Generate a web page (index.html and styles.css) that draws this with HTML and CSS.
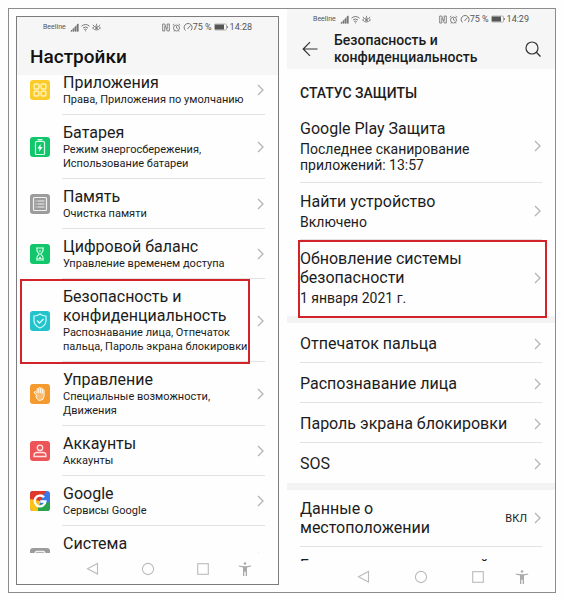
FILE: index.html
```html
<!DOCTYPE html>
<html lang="ru">
<head>
    <meta charset="UTF-8">
    <meta name="viewport" content="width=device-width, initial-scale=1.0">
    <title>Настройки безопасности</title>
    <link rel="stylesheet" href="styles.css">
</head>
<body>

    <!-- Shared icons -->
    <svg class="sprite" aria-hidden="true">
        <symbol id="chevron" viewBox="0 0 7 12"><path d="M1 1l5 5-5 5" fill="none" stroke="#b4b4b4" stroke-width="1.3"/></symbol>
        <symbol id="signal" viewBox="0 0 9 9"><path d="M0 8.500h8.500V0z" fill="#aaa"/><path d="M1 7h1v1.500H1zM3 5.500h1v3H3zM5 3.500h1v5H5zM7 1h1.500v7.500H7z" fill="#777"/></symbol>
        <symbol id="wifi" viewBox="0 0 9 9"><path d="M.5 3.200q4-3.400 8 0M2 5q2.500-2 5 0M3.300 6.600q1.200-1 2.400 0" fill="none" stroke="#777"/><circle cx="4.500" cy="7.800" r=".6" fill="#777"/></symbol>
        <symbol id="eye" viewBox="0 0 9 9"><path d="M.5 5q4-4 8 0-4 4-8 0zM4.500 2.500V.8M2 3.200l-1-1.400M7 3.200l1-1.400" fill="none" stroke="#777" stroke-width=".9"/><circle cx="4.500" cy="5" r="1.300" fill="#777"/></symbol>
        <symbol id="nfc" viewBox="0 0 8 9"><path d="M2.800 8H.7V1h2l2.600 7h2V1H5.200M2.800 3v5M5.200 1v5" fill="none" stroke="#777" stroke-width=".9"/></symbol>
        <symbol id="alarm" viewBox="0 0 9 9"><circle cx="4.500" cy="5" r="3" fill="none" stroke="#777" stroke-width=".9"/><path d="M.8 2.200L2.300 1M8.200 2.200L6.700 1M4.500 3.200V5l1.300.8M2.500 7.500L2 8.500M6.500 7.500l.5 1" fill="none" stroke="#777" stroke-width=".9"/></symbol>
        <symbol id="gauge" viewBox="0 0 10 10"><path d="M2.500 8.500A4 4 0 1 1 8 8.300M4.500 7l3-3.500" fill="none" stroke="#777" stroke-width="1"/></symbol>
        <symbol id="battery" viewBox="0 0 14 8"><rect x=".5" y="1" width="12" height="6" rx="1" fill="none" stroke="#999" stroke-width=".7"/><rect x="1" y="1.500" width="9" height="5" fill="#555"/><path d="M13.300 3v2" stroke="#777"/></symbol>
        <symbol id="nav-back" viewBox="0 0 14 14"><path d="M11.500 1.500v10.500L1.500 6.800z" fill="none" stroke="#bbb" stroke-width="1.100"/></symbol>
        <symbol id="nav-home" viewBox="0 0 14 14"><circle cx="7" cy="7" r="5.600" fill="none" stroke="#bbb" stroke-width="1.100"/></symbol>
        <symbol id="nav-recent" viewBox="0 0 14 14"><rect x="1.700" y="1.700" width="10.600" height="10.600" fill="none" stroke="#bbb" stroke-width="1.100"/></symbol>
        <symbol id="nav-access" viewBox="0 0 14 14"><circle cx="7" cy="1.500" r="1.300" fill="#aaa"/><path d="M.8 3.400Q7 5 13.200 3.400v1.200L9 5.400V14H7.700V9.800H6.300V14H5V5.400L.8 4.600z" fill="#aaa"/></symbol>
    </svg>

    <main class="frame">

        <!-- Settings list -->
        <section class="phone phone-left">
            <header class="top top-left">
                <div class="status">
                    <span class="carrier">Beeline</span>
                    <svg class="s9"><use href="#signal"/></svg>
                    <svg class="s9"><use href="#wifi"/></svg>
                    <svg class="s9"><use href="#eye"/></svg>
                    <span class="status-right">
                        <svg class="nfc"><use href="#nfc"/></svg>
                        <svg class="s9"><use href="#alarm"/></svg>
                        <span class="charge"><svg class="s10"><use href="#gauge"/></svg>75 %</span>
                        <svg class="battery"><use href="#battery"/></svg>
                        <span>14:28</span>
                    </span>
                </div>
                <h1>Настройки</h1>
            </header>

            <ul class="list settings">
                <li><a href="#apps">
                    <svg class="icon yellow" viewBox="0 0 20 20"><g fill="none" stroke="#fff3b8" stroke-width="1.400"><rect x="4" y="4" width="5" height="5" rx="1.500"/><rect x="11" y="4" width="5" height="5" rx="1.500"/><rect x="4" y="11" width="5" height="5" rx="1.500"/><rect x="11" y="11" width="5" height="5" rx="1.500"/></g></svg>
                    <span class="text"><b>Приложения</b><small>Права, Приложения по умолчанию</small></span>
                    <svg class="chevron"><use href="#chevron"/></svg>
                </a></li>
                <li><a href="#battery-page">
                    <svg class="icon green" viewBox="0 0 20 20"><rect x="5.500" y="4.500" width="9" height="13" rx="1" fill="none" stroke="#d9ffe9" stroke-width="1.200"/><path d="M7.500 2.800h5" stroke="#d9ffe9" stroke-width="1.400"/><path d="M10.500 7L7.500 11.500h2L9 15l3.500-5h-2z" fill="#fff"/></svg>
                    <span class="text"><b>Батарея</b><small>Режим энергосбережения,<br>Использование батареи</small></span>
                    <svg class="chevron"><use href="#chevron"/></svg>
                </a></li>
                <li><a href="#memory">
                    <svg class="icon gray" viewBox="0 0 20 20"><rect x="3.500" y="3.500" width="13" height="13" rx="1" fill="none" stroke="#f0f0f0" stroke-width="1.200"/><path d="M7.500 7h7M7.500 10h7M7.500 13h7M5.500 7h1M5.500 10h1M5.500 13h1" stroke="#f0f0f0" stroke-width="1.200"/></svg>
                    <span class="text"><b>Память</b><small>Очистка памяти</small></span>
                    <svg class="chevron"><use href="#chevron"/></svg>
                </a></li>
                <li><a href="#balance">
                    <svg class="icon green" viewBox="0 0 20 20"><path d="M6 4h8M6 16h8M7 4v2.500c0 2 2.200 2.500 2.200 3.500S7 11.500 7 13.500V16M13 4v2.500c0 2-2.200 2.500-2.200 3.500s2.200 1.500 2.200 3.500V16" fill="none" stroke="#d9ffe9" stroke-width="1.200"/><path d="M8.500 6.500h3L10 8zM8 15l2-2.500 2 2.500z" fill="#d9ffe9"/></svg>
                    <span class="text"><b>Цифровой баланс</b><small>Управление временем доступа</small></span>
                    <svg class="chevron"><use href="#chevron"/></svg>
                </a></li>
                <li class="marked"><a href="#security">
                    <svg class="icon teal" viewBox="0 0 20 20"><path d="M10 3q2.500 2 6 2v4.500q0 5-6 7.500-6-2.500-6-7.500V5q3.500 0 6-2z" fill="none" stroke="#d8fbff" stroke-width="1.200"/><path d="M7 9.500l2.500 2.500L13.500 8" fill="none" stroke="#d8fbff" stroke-width="1.300"/></svg>
                    <span class="text"><b>Безопасность и<br>конфиденциальность</b><small>Распознавание лица, Отпечаток<br>пальца, Пароль экрана блокировки</small></span>
                    <svg class="chevron"><use href="#chevron"/></svg>
                </a></li>
                <li><a href="#control">
                    <svg class="icon orange" viewBox="0 0 20 20"><path d="M7 12L4.600 9.200Q3.600 8 4.600 7.500q.8-.3 1.700.7L7 9V5.500q0-1 .8-1t.9 1V9 4.500q0-1 .9-1t.9 1V9 5q0-1 .9-1t.9 1v4.500V6.500q0-1 .9-1t.9 1V12q0 4-4 4.500-3.200 0-4.200-4.500z" fill="#f9bd74" stroke="#fff3df" stroke-width="1"/></svg>
                    <span class="text"><b>Управление</b><small>Специальные возможности,<br>Движения</small></span>
                    <svg class="chevron"><use href="#chevron"/></svg>
                </a></li>
                <li><a href="#accounts">
                    <svg class="icon red" viewBox="0 0 20 20"><g fill="none" stroke="#ffe3e3" stroke-width="1.300"><circle cx="10" cy="6.800" r="2.700"/><path d="M4 15.500v-1q0-3 3-3h6q3 0 3 3v1z"/></g></svg>
                    <span class="text"><b>Аккаунты</b><small>Аккаунты</small></span>
                    <svg class="chevron"><use href="#chevron"/></svg>
                </a></li>
                <li><a href="#google">
                    <svg class="icon" viewBox="0 0 20 20"><path d="M0 0h20v20H0z" fill="#3b78e7"/><path d="M0 0h16L10 10 0 12z" fill="#e0392b"/><path d="M0 8l10 2v10H0z" fill="#fbc116"/><path d="M8 14l12-3v9H8z" fill="#2ba24c"/><path d="M14 6.300A5.400 5.400 0 1 0 15.400 10.500H10.300" fill="none" stroke="#fff" stroke-width="2.400"/></svg>
                    <span class="text"><b>Google</b><small>Сервисы Google</small></span>
                    <svg class="chevron"><use href="#chevron"/></svg>
                </a></li>
                <li><a class="tall" href="#system">
                    <svg class="icon gray" viewBox="0 0 20 20"><rect x="5" y="3.500" width="10" height="13" rx="2" fill="none" stroke="#f0f0f0" stroke-width="1.300"/><circle cx="10" cy="7" r="2" fill="#f0f0f0"/></svg>
                    <span class="text"><b>Система</b></span>
                    <svg class="chevron"><use href="#chevron"/></svg>
                </a></li>
            </ul>

            <nav class="nav">
                <button aria-label="Назад"><svg><use href="#nav-back"/></svg></button>
                <button aria-label="Домой"><svg><use href="#nav-home"/></svg></button>
                <button aria-label="Недавние"><svg><use href="#nav-recent"/></svg></button>
                <button class="access" aria-label="Доступность"><svg><use href="#nav-access"/></svg></button>
            </nav>
        </section>

        <!-- Security page -->
        <section class="phone phone-right">
            <header class="top">
                <div class="status">
                    <span class="carrier">Beeline</span>
                    <svg class="s9"><use href="#signal"/></svg>
                    <svg class="s9"><use href="#wifi"/></svg>
                    <svg class="s9"><use href="#eye"/></svg>
                    <span class="status-right">
                        <svg class="nfc"><use href="#nfc"/></svg>
                        <svg class="s9"><use href="#alarm"/></svg>
                        <span class="charge"><svg class="s10"><use href="#gauge"/></svg>75 %</span>
                        <svg class="battery"><use href="#battery"/></svg>
                        <span>14:29</span>
                    </span>
                </div>
                <div class="title-bar">
                    <button aria-label="Назад"><svg class="back" viewBox="0 0 16 16"><path d="M15.500 8H1.500M8 1.200L1.200 8 8 14.800" fill="none" stroke="#333" stroke-width="1.200"/></svg></button>
                    <h2>Безопасность и<br>конфиденциальность</h2>
                    <button aria-label="Поиск"><svg class="search" viewBox="0 0 16 16"><circle cx="7" cy="7" r="6" fill="none" stroke="#333" stroke-width="1.200"/><path d="M11.300 11.300l4.200 4.200" stroke="#333" stroke-width="1.300"/></svg></button>
                </div>
            </header>

            <div class="list security">
                <h3>СТАТУС ЗАЩИТЫ</h3>
                <ul>
                    <li><a href="#protect"><span class="text"><b>Google Play Защита</b><small>Последнее сканирование<br>приложений: 13:57</small></span><svg class="chevron"><use href="#chevron"/></svg></a></li>
                    <li><a href="#find"><span class="text"><b>Найти устройство</b><small>Включено</small></span><svg class="chevron"><use href="#chevron"/></svg></a></li>
                    <li class="marked"><a href="#update"><span class="text"><b>Обновление системы<br>безопасности</b><small>1 января 2021 г.</small></span><svg class="chevron"><use href="#chevron"/></svg></a></li>
                </ul>
                <ul class="single">
                    <li><a href="#finger"><span class="text"><b>Отпечаток пальца</b></span><svg class="chevron"><use href="#chevron"/></svg></a></li>
                    <li><a href="#face"><span class="text"><b>Распознавание лица</b></span><svg class="chevron"><use href="#chevron"/></svg></a></li>
                    <li><a href="#password"><span class="text"><b>Пароль экрана блокировки</b></span><svg class="chevron"><use href="#chevron"/></svg></a></li>
                    <li><a href="#sos"><span class="text"><b>SOS</b></span><svg class="chevron"><use href="#chevron"/></svg></a></li>
                </ul>
                <ul>
                    <li><a href="#location"><span class="text"><b>Данные о<br>местоположении</b></span><span class="value">ВКЛ</span><svg class="chevron"><use href="#chevron"/></svg></a></li>
                    <li><a href="#lock"><span class="text"><b>Блокировка приложений</b></span></a></li>
                </ul>
            </div>

            <nav class="nav">
                <button aria-label="Назад"><svg><use href="#nav-back"/></svg></button>
                <button aria-label="Домой"><svg><use href="#nav-home"/></svg></button>
                <button aria-label="Недавние"><svg><use href="#nav-recent"/></svg></button>
                <button class="access" aria-label="Доступность"><svg><use href="#nav-access"/></svg></button>
            </nav>
        </section>
    </main>

</body>
</html>
```

FILE: styles.css
```css
* {
    box-sizing: border-box;
}

body {
    margin: 0;
    padding: 8px;
    background: #fefefe;
    color: #1c1c1c;
    font-family: Roboto, "Liberation Sans", sans-serif;
}

.sprite {
    display: none;
}

svg {
    display: block;
    flex: none;
}

h1, h2, h3, ul {
    margin: 0;
    padding: 0;
}

button {
    padding: 0;
    border: 0;
    background: none;
    cursor: pointer;
}

.frame {
    display: flex;
    gap: 8px;
    height: calc(100vh - 15px);
    border: 1px solid #8c8c8c;
}

.phone {
    display: flex;
    flex-direction: column;
    min-width: 0;
}

.phone-left {
    flex: 262;
    margin: 7px 0 7px 7px;
    border: 1px solid #7c7c7c;
}

.phone-right {
    flex: 269;
}

/* Status bar and page titles */
.top {
    position: relative;
    z-index: 1;
    flex: none;
    height: 60px;
    background: #f6f6f6;
}

.top-left {
    height: 58px;
}

.status {
    display: flex;
    align-items: center;
    gap: 2px;
    height: 20px;
    padding: 0 26px;
    color: #555;
    font-size: 9px;
}

.carrier {
    margin-right: 2px;
    font-size: 7px;
}

.status-right {
    display: flex;
    align-items: center;
    gap: 2px;
    margin-left: auto;
}

.charge {
    display: flex;
    align-items: center;
}

.s9 {
    width: 9px;
    height: 9px;
}

.s10 {
    width: 10px;
    height: 10px;
}

.nfc {
    width: 8px;
    height: 9px;
}

.battery {
    width: 14px;
    height: 8px;
}

h1 {
    padding: 8px 13px 0;
    color: #111;
    font-size: 19px;
    font-weight: 500;
    line-height: 24px;
}

.title-bar {
    display: flex;
    align-items: center;
    padding: 3px 14px 0 15px;
}

.title-bar h2 {
    flex: 1;
    margin-left: 16px;
    font-size: 14px;
    font-weight: 500;
    line-height: 17px;
}

.back, .search {
    width: 16px;
    height: 16px;
}

/* Lists */
.list {
    flex: 1;
    min-height: 0;
    overflow: hidden;
}

.settings {
    margin-top: -10px;
}

li {
    position: relative;
    list-style: none;
}

li a {
    display: flex;
    align-items: center;
    padding: 8px 14px 7px 13px;
    color: inherit;
    text-decoration: none;
}

li::before {
    content: "";
    position: absolute;
    right: 13px;
    bottom: 0;
    left: 13px;
    height: 1px;
    background: #e2e2e2;
}

.settings li {
    padding-bottom: 1px;
}

.settings li::before {
    left: 45px;
}

.text {
    flex: 1;
}

.tall {
    height: 63px;
}

.tall .text {
    align-self: flex-start;
}

.text b {
    display: block;
    font-size: 16px;
    font-weight: 400;
    line-height: 19px;
    white-space: nowrap;
}

.text small {
    display: block;
    margin-top: 1px;
    font-size: 11px;
    line-height: 14px;
    white-space: nowrap;
}

.chevron {
    width: 7px;
    height: 12px;
}

.icon {
    width: 20px;
    height: 20px;
    margin-right: 13px;
    border-radius: 3px;
}

.yellow { background: #fbcb2c; }
.green { background: #12c76b; }
.gray { background: #9c9c9c; }
.teal { background: #22c3cb; }
.orange { background: #f59a2f; }
.red { background: #ec5458; }

.security h3 {
    padding: 15px 13px 7px;
    font-size: 14px;
    font-weight: 500;
    line-height: 19px;
}

.security ul + ul {
    border-top: 7px solid #f3f3f3;
}

.security li a {
    padding-top: 9px;
    padding-bottom: 10px;
}

.security .single li a {
    padding-top: 11px;
}

.security li:last-child::before {
    display: none;
}

.security .text small {
    margin-top: 3px;
    font-size: 14px;
    line-height: 16px;
}

.value {
    margin-right: 7px;
    font-size: 11px;
}

/* Red highlight */
.marked::after {
    content: "";
    position: absolute;
    top: 0;
    right: 28px;
    bottom: -2px;
    left: 3px;
    border: 2px solid #d2232a;
}

.security .marked::after {
    right: 8px;
    left: 11px;
}

/* Navigation buttons */
.nav {
    display: flex;
    flex: none;
    align-items: center;
    justify-content: flex-end;
    gap: 41px;
    height: 31px;
    padding-right: 26px;
}

.phone-right .nav {
    gap: 43px;
}

.nav svg {
    width: 14px;
    height: 14px;
}

.nav .access {
    margin-left: -13px;
}
```
